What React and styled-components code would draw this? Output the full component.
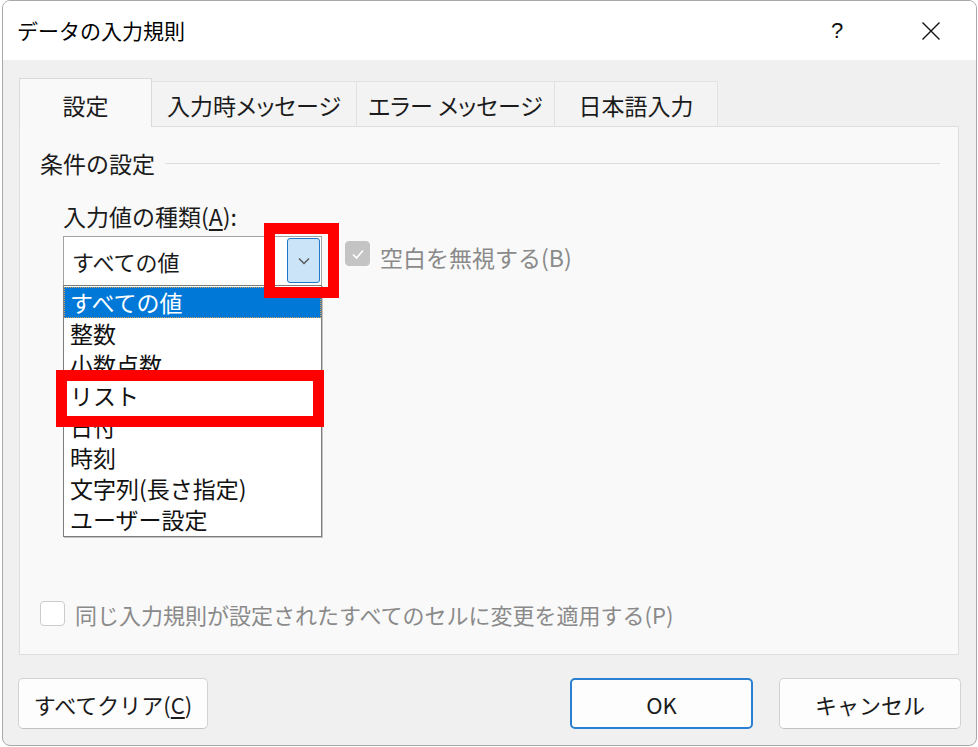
import React from 'react';
import styled, { createGlobalStyle } from 'styled-components';

const font = `"Noto Sans CJK JP", "Noto Sans", sans-serif`;

const Global = createGlobalStyle`
  html, body { margin: 0; padding: 0; background: #ffffff; }
  body { font-family: ${font}; color: #1b1b1b; }
  * { box-sizing: border-box; }
`;

const Window = styled.div`
  position: relative;
  margin-left: 2px;
  width: 975px;
  height: 746px;
  border: 1px solid #a9a9a9;
  border-radius: 8px;
  overflow: hidden;
  background: #f0f0f0;
  display: flex;
  flex-direction: column;
`;

const TitleBar = styled.div`
  height: 59px;
  flex: none;
  background: #ffffff;
  display: flex;
  align-items: center;
  padding-left: 14px;
`;

const Title = styled.div`
  flex: 1;
  font-size: 21px;
  color: #000;
  line-height: 28px;
  padding-bottom: 2px;
`;

const TitleButton = styled.div`
  width: ${(p) => p.$w}px;
  height: 59px;
  display: flex;
  align-items: center;
  justify-content: center;
  font-family: "Liberation Sans", sans-serif;
  font-size: 22px;
  color: #111;
`;

const Body = styled.div`
  flex: 1;
  display: flex;
  flex-direction: column;
  padding: 18px 17px 0 16px;
`;

const TabRow = styled.div`
  height: 48px;
  display: flex;
  align-items: flex-end;
`;

const Tab = styled.div`
  position: relative;
  z-index: ${(p) => (p.$active ? 2 : 1)};
  width: ${(p) => p.$w}px;
  height: ${(p) => (p.$active ? 49 : 45)}px;
  margin-bottom: ${(p) => (p.$active ? -1 : 0)}px;
  margin-left: ${(p) => (p.$first ? 0 : -1)}px;
  background: ${(p) => (p.$active ? '#f9f9f9' : '#f3f3f3')};
  border: 1px solid ${(p) => (p.$active ? '#dadada' : '#e2e2e2')};
  border-bottom: none;
  display: flex;
  align-items: center;
  justify-content: center;
  padding-top: ${(p) => (p.$active ? 4 : 2)}px;
  font-size: 23px;
  font-feature-settings: "palt";
  color: #1b1b1b;
  white-space: pre;
`;

const Panel = styled.div`
  position: relative;
  z-index: 1;
  height: 529px;
  flex: none;
  background: #f9f9f9;
  border: 1px solid #dedede;
  display: flex;
  flex-direction: column;
  padding: 21px 18px 25px 20px;
`;

const GroupHeader = styled.div`
  display: flex;
  align-items: center;
  font-size: 23px;
  line-height: 30px;
  color: #1b1b1b;
  &::after {
    content: '';
    flex: 1;
    height: 1px;
    background: #dcdcdc;
    margin-left: 10px;
  }
`;

const FieldLabel = styled.div`
  margin: 23px 0 0 23px;
  font-size: 23px;
  line-height: 30px;
  color: #1b1b1b;
`;

const Mnemonic = styled.span`
  text-decoration: underline;
  text-underline-offset: 3px;
`;

const ComboRow = styled.div`
  margin: 5px 0 0 23px;
  display: flex;
  align-items: flex-start;
  gap: 23px;
`;

const Combo = styled.div`
  position: relative;
  width: 259px;
  height: 50px;
  border: 1px solid #a2a2a2;
  background: #ffffff;
  display: flex;
  align-items: flex-start;
  padding-left: 8px;
`;

const ComboValue = styled.div`
  flex: 1;
  font-size: 22px;
  line-height: 48px;
  color: #1b1b1b;
`;

const DropButton = styled.div`
  width: 33px;
  height: 45px;
  margin: 1px 1px 0 0;
  background: #cce4f7;
  border: 1px solid #1f78c8;
  border-radius: 3px;
  display: flex;
  align-items: center;
  justify-content: center;
`;

const DropList = styled.div`
  position: absolute;
  top: 100%;
  left: -1px;
  width: 259px;
  height: 252px;
  background: #ffffff;
  border: 1px solid #7d7d7d;
  box-shadow: 1px 1px 0 #c4c4c4;
  padding-top: 1px;
  z-index: 3;
`;

const ListItem = styled.div`
  height: 31px;
  padding-left: 6px;
  font-size: 23px;
  line-height: 31px;
  color: ${(p) => (p.$selected ? '#ffffff' : '#111111')};
  background: ${(p) => (p.$selected ? '#0078d7' : 'transparent')};
  outline: ${(p) => (p.$selected ? '1px dotted #d9a25a' : 'none')};
  outline-offset: -1px;
  white-space: nowrap;
`;

const CheckRow = styled.div`
  display: flex;
  align-items: flex-start;
  margin-top: ${(p) => (p.$bottom ? 'auto' : '0')};
`;

const CheckBox = styled.div`
  flex: none;
  width: 25px;
  height: 25px;
  margin-top: ${(p) => p.$offset || 0}px;
  border-radius: 4px;
  background: ${(p) => (p.$checked ? '#c4c4c4' : '#ffffff')};
  border: 1px solid ${(p) => (p.$checked ? '#c4c4c4' : '#cbcbcb')};
  display: flex;
  align-items: center;
  justify-content: center;
`;

const CheckLabel = styled.div`
  margin-left: 10px;
  margin-top: ${(p) => p.$offset || 0}px;
  font-size: ${(p) => p.$size || 23}px;
  line-height: 30px;
  color: #8a8a8a;
  white-space: nowrap;
`;

const Footer = styled.div`
  flex: 1;
  display: flex;
  align-items: flex-start;
  margin: 0 -2px 0 -1px;
  padding-top: 23px;
  gap: 26px;
`;

const Button = styled.div`
  width: ${(p) => p.$w}px;
  height: 51px;
  margin-left: ${(p) => (p.$push ? 'auto' : '0')};
  background: #fdfdfd;
  border: ${(p) => (p.$default ? '2px solid #2a7fd0' : '1px solid #d2d2d2')};
  border-bottom-color: ${(p) => (p.$default ? '#2a7fd0' : '#c2c2c2')};
  border-radius: 5px;
  display: flex;
  align-items: center;
  justify-content: center;
  font-size: 22px;
  color: #1b1b1b;
`;

const Annotation = styled.div`
  position: absolute;
  z-index: 10;
  left: ${(p) => p.$x}px;
  top: ${(p) => p.$y}px;
  width: ${(p) => p.$w}px;
  height: ${(p) => p.$h}px;
  border: 11px solid #ff0000;
  pointer-events: none;
`;

const items = ['すべての値', '整数', '小数点数', 'リスト', '日付', '時刻', '文字列(長さ指定)', 'ユーザー設定'];

const tabs = [
  { label: '設定', w: 133, active: true },
  { label: '入力時メッセージ', w: 206 },
  { label: 'エラー メッセージ', w: 199 },
  { label: '日本語入力', w: 164 },
];

export default function App() {
  return (
    <>
      <Global />
      <Window>
        <TitleBar>
          <Title>データの入力規則</Title>
          <TitleButton $w={98}>?</TitleButton>
          <TitleButton $w={90}>
            <svg width="20" height="20" viewBox="0 0 20 20">
              <path d="M1.5 1.5 L18.5 18.5 M18.5 1.5 L1.5 18.5" stroke="#111" strokeWidth="1.4" fill="none" />
            </svg>
          </TitleButton>
        </TitleBar>
        <Body>
          <TabRow>
            {tabs.map((t, i) => (
              <Tab key={t.label} $w={t.w} $active={t.active} $first={i === 0}>
                {t.label}
              </Tab>
            ))}
          </TabRow>
          <Panel>
            <GroupHeader>条件の設定</GroupHeader>
            <FieldLabel>
              入力値の種類(<Mnemonic>A</Mnemonic>):
            </FieldLabel>
            <ComboRow>
              <Combo>
                <ComboValue>すべての値</ComboValue>
                <DropButton>
                  <svg width="12" height="8" viewBox="0 0 12 8">
                    <path d="M1 1.5 L6 6.5 L11 1.5" stroke="#555" strokeWidth="1.3" fill="none" />
                  </svg>
                </DropButton>
                <DropList>
                  {items.map((it, i) => (
                    <ListItem key={it} $selected={i === 0}>
                      {it}
                    </ListItem>
                  ))}
                </DropList>
              </Combo>
              <CheckRow>
                <CheckBox $checked $offset={5}>
                  <svg width="16" height="16" viewBox="0 0 16 16">
                    <path d="M3 8.5 L6.5 12 L13 4.5" stroke="#fff" strokeWidth="1.6" fill="none" />
                  </svg>
                </CheckBox>
                <CheckLabel $offset={6}>空白を無視する(B)</CheckLabel>
              </CheckRow>
            </ComboRow>
            <CheckRow $bottom>
              <CheckBox $offset={2} />
              <CheckLabel $size={22}>同じ入力規則が設定されたすべてのセルに変更を適用する(P)</CheckLabel>
            </CheckRow>
          </Panel>
          <Footer>
            <Button $w={190}>
              すべてクリア(<Mnemonic>C</Mnemonic>)
            </Button>
            <Button $w={183} $push $default>
              OK
            </Button>
            <Button $w={182}>キャンセル</Button>
          </Footer>
        </Body>
        <Annotation $x={261} $y={222} $w={75} $h={75} />
        <Annotation $x={53} $y={369} $w={268} $h={57} />
      </Window>
    </>
  );
}
